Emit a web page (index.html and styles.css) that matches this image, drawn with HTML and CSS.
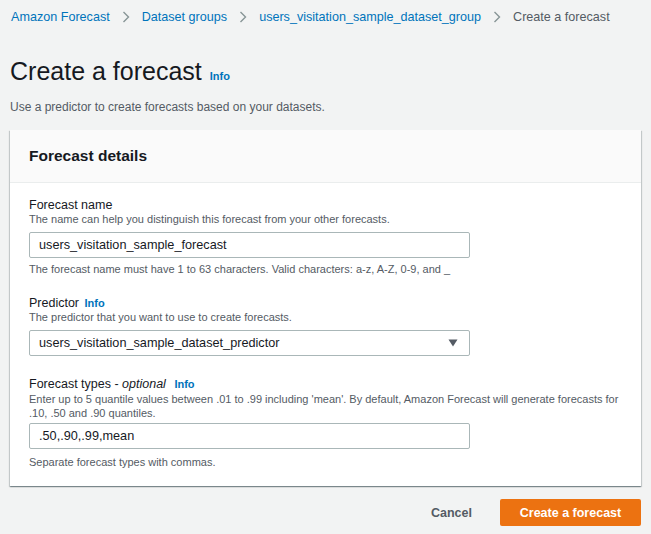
FILE: index.html
```html
<!DOCTYPE html>
<html>
    <head>
        <title>Create a forecast</title>
        <link rel="stylesheet" href="styles.css">
    </head>
    <body>
        <div class="page">
            <nav class="crumbs">
                <a href="#">Amazon Forecast</a>
                <svg class="chev" width="8" height="12" viewBox="0 0 8 12"><polyline points="1.5,1 6.5,6 1.5,11" /></svg>
                <a href="#">Dataset groups</a>
                <svg class="chev" width="8" height="12" viewBox="0 0 8 12"><polyline points="1.5,1 6.5,6 1.5,11" /></svg>
                <a href="#">users_visitation_sample_dataset_group</a>
                <svg class="chev" width="8" height="12" viewBox="0 0 8 12"><polyline points="1.5,1 6.5,6 1.5,11" /></svg>
                <span class="current">Create a forecast</span>
            </nav>

            <h1 class="title">Create a forecast <a href="#" class="info infoTitle">Info</a></h1>
            <p class="intro">Use a predictor to create forecasts based on your datasets.</p>

            <div class="panel">
                <div class="panelHead">Forecast details</div>
                <div class="panelBody">
                    <div class="field fieldName">
                        <div class="label">Forecast name</div>
                        <div class="hint">The name can help you distinguish this forecast from your other forecasts.</div>
                        <input type="text" class="textInput" value="users_visitation_sample_forecast" />
                        <div class="constraint">The forecast name must have 1 to 63 characters. Valid characters: a-z, A-Z, 0-9, and _</div>
                    </div>

                    <div class="field fieldPredictor">
                        <div class="label">Predictor <a href="#" class="info">Info</a></div>
                        <div class="hint">The predictor that you want to use to create forecasts.</div>
                        <div class="select">
                            <span>users_visitation_sample_dataset_predictor</span>
                            <svg width="10" height="8" viewBox="0 0 10 8"><polygon points="0.5,0.5 9.5,0.5 5,7.5" /></svg>
                        </div>
                    </div>

                    <div class="field fieldTypes">
                        <div class="label">Forecast types - <i>optional</i> <a href="#" class="info infoWide">Info</a></div>
                        <div class="hint hintLong">Enter up to 5 quantile values between .01 to .99 including 'mean'. By default, Amazon Forecast will generate forecasts for .10, .50 and .90 quantiles.</div>
                        <input type="text" class="textInput typesInput" value=".50,.90,.99,mean" />
                        <div class="constraint">Separate forecast types with commas.</div>
                    </div>
                </div>
            </div>

            <div class="actions">
                <button class="btnCancel">Cancel</button>
                <button class="btnCreate">Create a forecast</button>
            </div>
        </div>
    </body>
</html>
```

FILE: styles.css
```css
body{
    margin: 0;
    background-color: #f2f3f3;
    font-family: "Liberation Sans", Arial, sans-serif;
    color: #16191f;
}

.page{
    padding: 0 10px;
}

a{
    color: #0073bb;
    text-decoration: none;
}

.crumbs{
    height: 34px;
    display: flex;
    align-items: center;
    font-size: 12.6px;
    padding-left: 1px;
}

.chev{
    margin: 0 12px;
    fill: none;
    stroke: #879596;
    stroke-width: 1.4;
}

.crumbs .current{
    color: #545b64;
}

.title{
    margin: 22px 0 0 0;
    font-size: 25px;
    line-height: 30px;
    font-weight: normal;
}

.info{
    font-size: 11px;
    font-weight: bold;
    margin-left: 2px;
}

.infoTitle{
    margin-left: 1px;
}

.infoWide{
    margin-left: 5px;
}

.intro{
    margin: 8px 0 0 0;
    font-size: 12px;
    line-height: 16px;
    color: #545b64;
}

.panel{
    margin-top: 15px;
    background-color: #ffffff;
    box-shadow: 0 1px 1px 0 rgba(0,28,36,.3), 1px 1px 1px 0 rgba(0,28,36,.15), -1px 1px 1px 0 rgba(0,28,36,.15);
}

.panelHead{
    height: 52px;
    display: flex;
    align-items: center;
    padding: 0 19px;
    background-color: #fafafa;
    border-bottom: 1px solid #eaeded;
    font-size: 15.5px;
    font-weight: bold;
}

.panelBody{
    padding: 14px 19px 17px 19px;
}

.label{
    font-size: 12.5px;
    line-height: 16px;
}

.hint{
    font-size: 11px;
    line-height: 13px;
    color: #545b64;
}

.hintLong{
    line-height: 14px;
}

.textInput, .select{
    display: block;
    box-sizing: border-box;
    width: 441px;
    height: 26px;
    margin-top: 6px;
    padding: 0 9px;
    border: 1px solid #aab7b8;
    border-radius: 2px;
    font-family: "Liberation Sans", Arial, sans-serif;
    font-size: 12.7px;
    color: #16191f;
    background-color: #ffffff;
}

.typesInput{
    margin-top: 3px;
}

.select{
    display: flex;
    align-items: center;
    justify-content: space-between;
    padding-right: 11px;
}

.select svg{
    fill: #545b64;
}

.constraint{
    margin-top: 4px;
    font-size: 11px;
    line-height: 14px;
    color: #545b64;
}

.fieldTypes .constraint{
    margin-top: 6px;
}

.fieldPredictor{
    margin-top: 19px;
}

.fieldTypes{
    margin-top: 20px;
}

.actions{
    display: flex;
    justify-content: flex-end;
    align-items: center;
    margin-top: 13px;
}

.actions button{
    font-family: "Liberation Sans", Arial, sans-serif;
    font-weight: bold;
    font-size: 12.5px;
    border: none;
    border-radius: 2px;
}

.btnCancel{
    background: none;
    color: #545b64;
    padding: 0;
    margin-right: 28px;
}

.btnCreate{
    width: 141px;
    height: 27px;
    background-color: #ec7211;
    color: #ffffff;
}
```
